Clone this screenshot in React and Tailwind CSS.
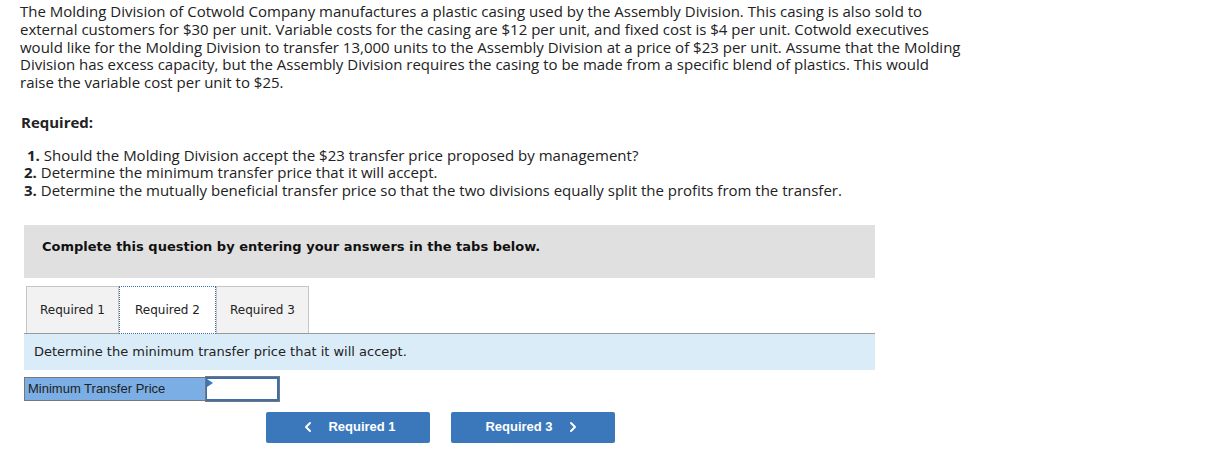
import { ChevronLeft, ChevronRight } from 'lucide-react';

const body = { fontFamily: '"Open Sans", Lato, sans-serif' };
const verdana = { fontFamily: '"DejaVu Sans", Verdana, sans-serif' };
const arial = { fontFamily: '"Liberation Sans", Arial, sans-serif' };

function Tab({ label, active }) {
  if (active) {
    return (
      <div className="flex h-[48px] w-[97px] items-center justify-center border border-dotted border-[#3a6fb0] bg-white text-[12px] text-[#222]">
        {label}
      </div>
    );
  }
  return (
    <div className="flex h-[47px] w-[93px] items-center justify-center border border-b-0 border-[#c6c6c6] bg-[#f2f2f2] text-[12px] text-[#222]">
      {label}
    </div>
  );
}

export default function App() {
  return (
    <div className="min-h-[471px] w-[1212px] bg-white pt-[3px] text-[#222]">
      <p className="pl-[20px] text-[15px] leading-[17.75px]" style={body}>
        The Molding Division of Cotwold Company manufactures a plastic casing used by the Assembly Division. This casing is also sold to
        <br />
        external customers for $30 per unit. Variable costs for the casing are $12 per unit, and fixed cost is $4 per unit. Cotwold executives
        <br />
        would like for the Molding Division to transfer 13,000 units to the Assembly Division at a price of $23 per unit. Assume that the Molding
        <br />
        Division has excess capacity, but the Assembly Division requires the casing to be made from a specific blend of plastics. This would
        <br />
        raise the variable cost per unit to $25.
      </p>

      <p className="mt-[21px] pl-[21px] text-[15px] font-bold leading-[18px]" style={body}>
        Required:
      </p>

      <p className="mt-[16px] pl-[24px] text-[15px] leading-[17.6px]" style={body}>
        <span className="pl-[3px] font-bold">1.</span> Should the Molding Division accept the $23 transfer price proposed by management?
        <br />
        <span className="font-bold">2.</span> Determine the minimum transfer price that it will accept.
        <br />
        <span className="font-bold">3.</span> Determine the mutually beneficial transfer price so that the two divisions equally split the profits from the transfer.
      </p>

      <div className="ml-[24px] mt-[25px] w-[851px]">
        <div className="h-[53px] bg-[#e0e0e0] pl-[18px] pt-[14px] text-[13px] font-bold leading-[16px] text-[#111]" style={verdana}>
          Complete this question by entering your answers in the tabs below.
        </div>

        <div className="relative z-10 mt-[8px] flex items-start pl-[2px]" style={verdana}>
          <Tab label="Required 1" />
          <Tab label="Required 2" active />
          <Tab label="Required 3" />
        </div>
        <div className="-mt-px h-px bg-[#9a9a9a]" />

        <div className="flex h-[36px] items-center bg-[#dbecf9] pl-[10px] text-[13px] text-[#222]" style={verdana}>
          Determine the minimum transfer price that it will accept.
        </div>

        <div className="mt-[7px] flex h-[24px] w-[255px]" style={arial}>
          <div className="flex w-[182px] items-center border border-[#777] bg-[#7aaee4] pl-[3px] text-[13px] text-[#222]">
            Minimum Transfer Price
          </div>
          <div className="relative w-[73px] border-2 border-l border-[#3a6fb0] bg-white outline outline-1 outline-[#777]">
            <span className="absolute left-0 top-0 h-0 w-0 border-y-[4px] border-l-[6px] border-y-transparent border-l-[#3a78bb]" />
          </div>
        </div>

        <div className="ml-[242px] mt-[11px] flex gap-[21px]" style={arial}>
          <button className="flex h-[31px] w-[164px] items-center justify-center gap-[12px] rounded-[2px] bg-[#3a78bb] text-[13px] font-bold text-white">
            <ChevronLeft size={16} strokeWidth={3} />
            Required 1
          </button>
          <button className="flex h-[31px] w-[164px] items-center justify-center gap-[12px] rounded-[2px] bg-[#3a78bb] text-[13px] font-bold text-white">
            Required 3
            <ChevronRight size={16} strokeWidth={3} />
          </button>
        </div>
      </div>
    </div>
  );
}
